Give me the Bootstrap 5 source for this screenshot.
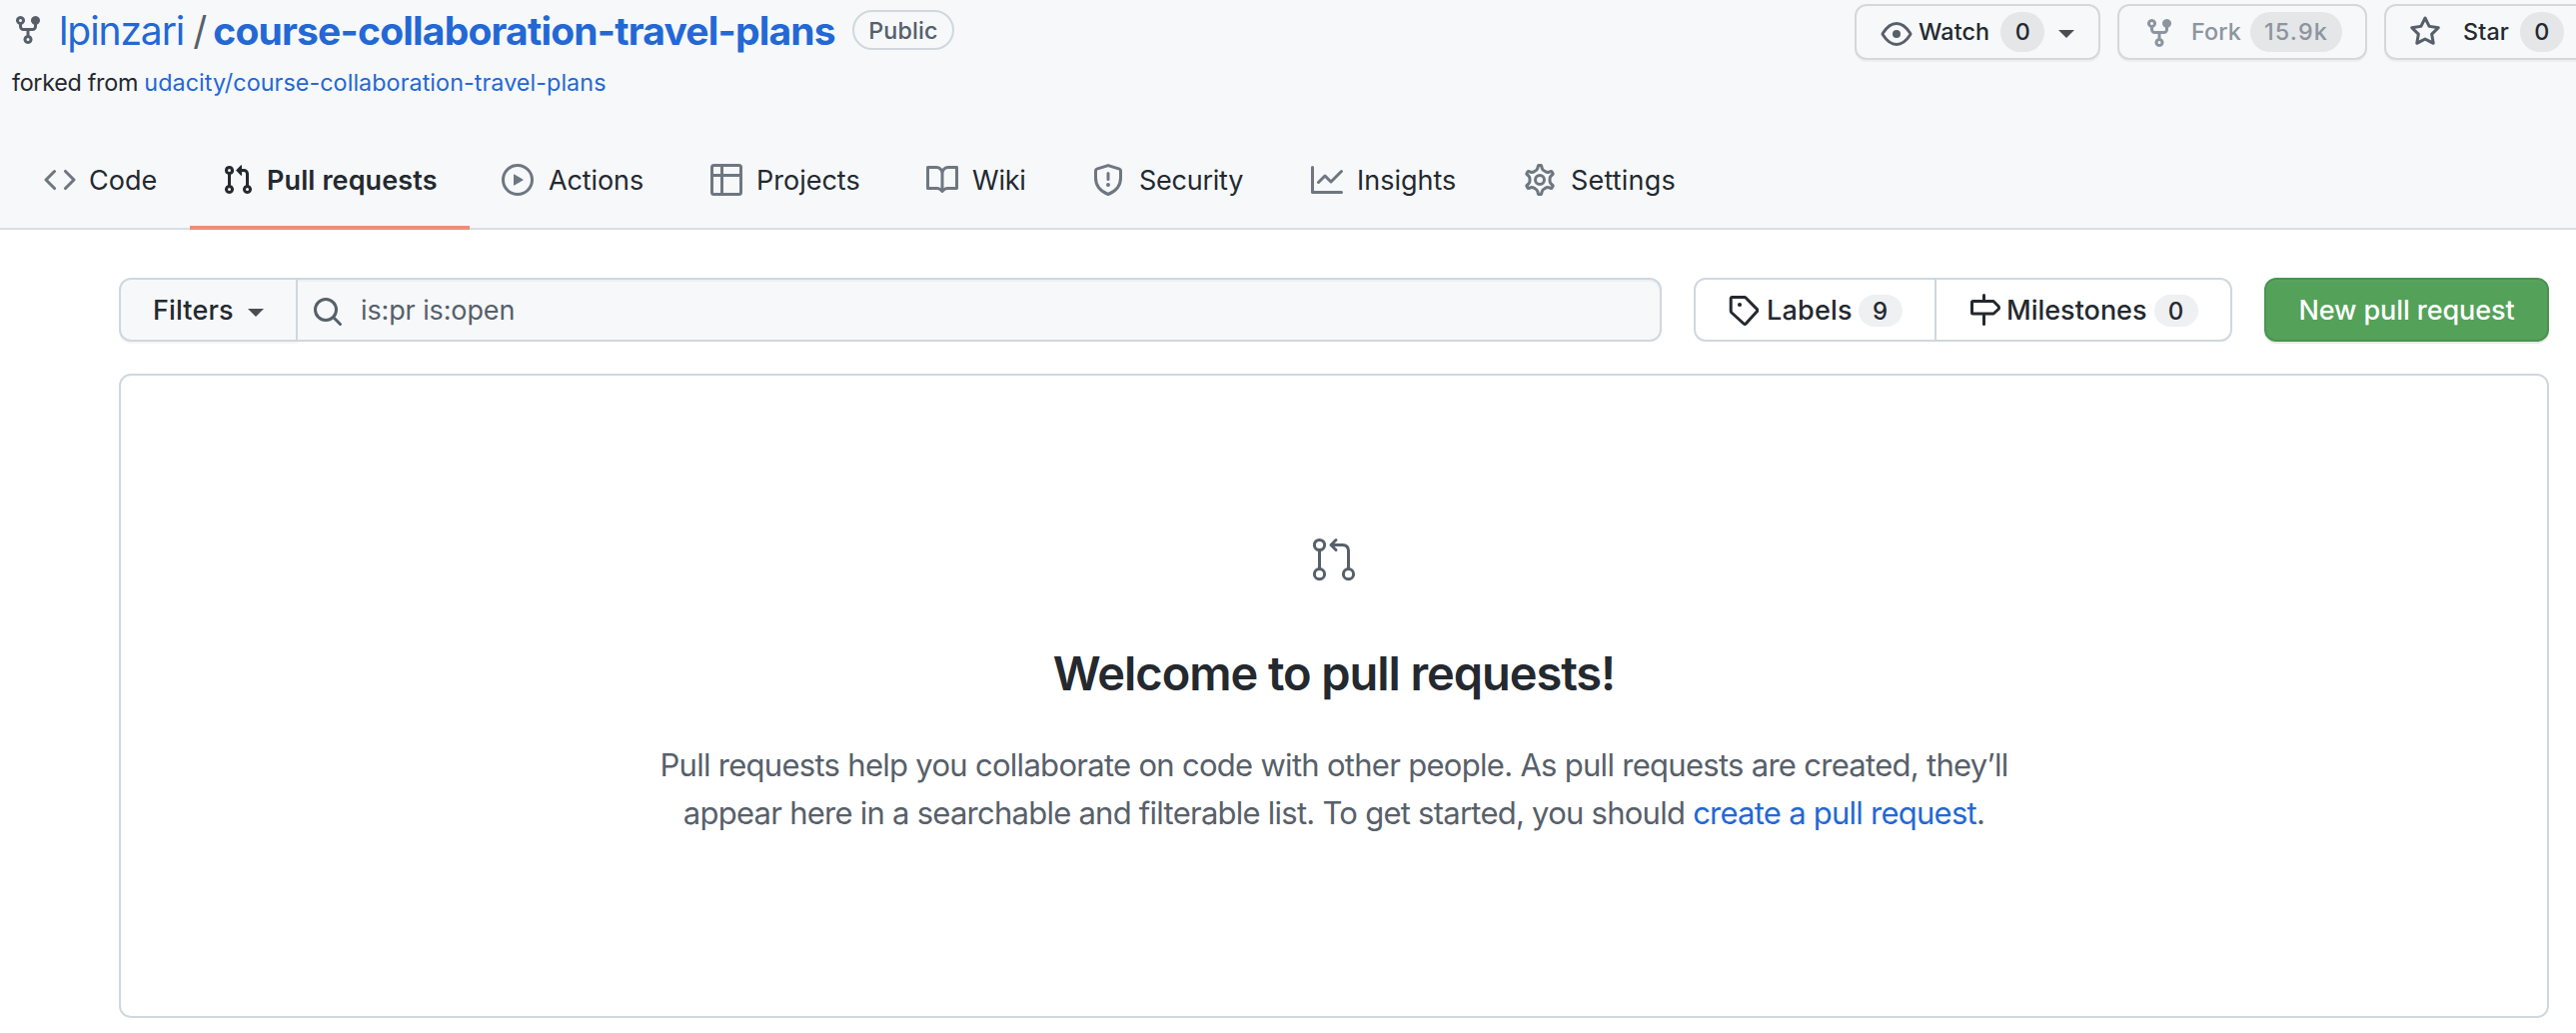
<!DOCTYPE html>
<html lang="en">
<head>
<meta charset="utf-8">
<title>Pull requests · lpinzari/course-collaboration-travel-plans</title>
<link href="https://cdn.jsdelivr.net/npm/bootstrap@5.3.0/dist/css/bootstrap.min.css" rel="stylesheet">
<style>
body{font-family:Inter,"Liberation Sans",sans-serif;color:#24292f;background:#fff;overflow:hidden}
a{color:#2368d4;text-decoration:none}
svg{display:block;flex:none;fill:currentColor}
.ln{fill:none;stroke:currentColor}
.repo-head{height:230px;background:#f6f8fa;border-bottom:2px solid #d8dee4;overflow:visible}
.repo-title{height:60px;margin-top:1px;padding-left:12px;font-size:39px;white-space:nowrap}
.repo-title svg{color:#57606a;margin-top:-3px}
.owner{margin-left:15px;letter-spacing:-1.1px}
.slash{color:#57606a;margin:0 6px 0 9px}
.repo-name{font-weight:650;letter-spacing:-.8px}
.pill{height:40px;border:2px solid #d0d7de;border-radius:40px;color:#57606a;font-size:23.3px;font-weight:500;letter-spacing:.1px;margin:-2px 0 0 17px;padding-top:2px;width:102px}
.fork-note{font-size:23.3px;line-height:34px;padding-left:12px;margin-top:5px}
.fork-note span{letter-spacing:-.28px}
.fork-note a{letter-spacing:.08px}
.actions{padding-top:4px;gap:17px}
.act{height:56px;border:2px solid #d5d8da;border-radius:12px;background:#f6f8fa;box-shadow:0 2px 0 rgba(27,31,36,.04);font-size:23.3px;font-weight:500;letter-spacing:.15px;white-space:nowrap}
.act svg{color:#57606a}
.act.off,.act.off svg{color:#8c959f}
.act span:not(.caret){padding-top:1px}
.cnt{height:40px;border-radius:40px;background:#e4e6e8}
.caret{border:8px solid transparent;border-top-color:#4a4e53;border-bottom:0}
.tabs{padding-left:12px;margin-bottom:-2px;height:96px}
.tab{padding:0 0 4px 32px;font-size:27px;gap:14px;color:#24292f;white-space:nowrap}
.tab svg{color:#6e7781}
.tab span{padding-top:2px}
.tab.on{font-weight:600;letter-spacing:.1px;padding-bottom:0;border-bottom:4px solid #ee8e79}
.tab.on svg{color:#24292f}
.content{padding:48px 27px 0 119px}
.bar{height:64px;margin-bottom:32px;font-size:27px;font-weight:500;white-space:nowrap}
.lbl{padding-top:2px}
.seg{border:2px solid #d0d7de;height:64px}
.filters{width:179px;border-radius:12px 0 0 12px;background:#f6f8fa;border-right:2px solid #d0d7de;box-shadow:0 2px 0 rgba(27,31,36,.04);padding-left:32px;letter-spacing:.15px}
.query{width:1367px;margin-left:-2px;border-radius:0 12px 12px 0;background:#f6f8fa;box-shadow:inset 0 2px 0 rgba(208,215,222,.25);color:#57606a;padding-left:14px;font-weight:400;letter-spacing:-.12px}
.linkset{width:539px;border-radius:12px;margin-left:32px}
.cnt2{height:32px;width:44px;border-radius:32px;background:#eef0f2;font-size:24px;padding-top:1px;margin-top:2px}
.newpr{width:285px;margin-left:32px;border:2px solid #4a9350;border-radius:12px;background:#54a159;color:#fff;letter-spacing:-.08px;box-shadow:0 2px 0 rgba(27,31,36,.1),inset 0 2px 0 rgba(255,255,255,.03)}
.blank{height:645px;border:2px solid #d0d7de;border-radius:12px;padding-top:160px}
.blank svg{color:#57606a}
.blank h3{font-size:47px;line-height:60px;font-weight:600;letter-spacing:-1.07px;margin:60px 0 0}
.blank p{font-size:31px;line-height:48px;color:#57606a;letter-spacing:-.71px;margin:38px 0 0;white-space:nowrap}
.blank .second{letter-spacing:-.75px}
</style>
<script src="https://cdn.jsdelivr.net/npm/bootstrap@5.3.0/dist/js/bootstrap.bundle.min.js"></script>
</head>
<body>
<svg width="0" height="0" class="position-absolute" aria-hidden="true"><defs>
<symbol id="fork" viewBox="0 0 16 16"><path d="M5 3.25a.75.75 0 11-1.5 0 .75.75 0 011.5 0zm0 2.122a2.25 2.25 0 10-1.5 0v.878A2.25 2.25 0 005.75 8.5h1.5v2.128a2.251 2.251 0 101.5 0V8.5h1.5a2.25 2.25 0 002.25-2.25v-.878a2.25 2.25 0 10-1.5 0v.878a.75.75 0 01-.75.75h-4.5A.75.75 0 015 6.25v-.878zm3.75 7.378a.75.75 0 11-1.5 0 .75.75 0 011.5 0zm3-8.75a.75.75 0 100-1.5.75.75 0 000 1.5z"/></symbol>
</defs></svg>
<header class="repo-head d-flex flex-column">
  <div class="d-flex">
    <div>
      <div class="repo-title d-flex align-items-center">
        <svg width="32" height="32"><use href="#fork"/></svg>
        <a class="owner" href="#">lpinzari</a><span class="slash">/</span><a class="repo-name" href="#">course-collaboration-travel-plans</a>
        <span class="pill d-flex align-items-center justify-content-center">Public</span>
      </div>
      <div class="fork-note"><span>forked from </span><a href="#">udacity/course-collaboration-travel-plans</a></div>
    </div>
    <div class="actions d-flex ms-auto">
      <div class="act d-flex align-items-center" style="width:246px;padding-left:24px">
        <svg width="32" height="32" viewBox="0 0 16 16" class="ln" style="margin-top:4px" stroke-width="1.5"><path d="M1.15 7.65C2.4 5.7 4.9 2.75 8 2.75s5.6 2.95 6.85 4.9a.6.6 0 010 .7C13.6 10.3 11.1 13.25 8 13.25S2.4 10.3 1.15 8.35a.6.6 0 010-.7z"/><circle cx="8" cy="8" r="2" fill="currentColor" stroke="none"/></svg>
        <span style="margin-left:6px">Watch</span>
        <span class="cnt d-flex align-items-center justify-content-center" style="width:44px;margin-left:11px">0</span>
        <span class="caret" style="margin:4px 0 0 14px"></span>
      </div>
      <div class="act off d-flex align-items-center" style="width:250px;padding-left:24px">
        <svg width="32" height="32" style="margin-top:2px"><use href="#fork"/></svg>
        <span style="margin-left:16px">Fork</span>
        <span class="cnt d-flex align-items-center justify-content-center" style="width:92px;margin-left:9px;letter-spacing:1.2px">15.9k</span>
      </div>
      <div class="act d-flex align-items-center border-end-0 rounded-end-0" style="width:192px;padding-left:23px">
        <svg width="32" height="32" viewBox="0 0 16 16"><path fill-rule="evenodd" d="M8 .25a.75.75 0 01.673.418l1.882 3.815 4.21.612a.75.75 0 01.416 1.279l-3.046 2.97.719 4.192a.75.75 0 01-1.088.791L8 12.347l-3.766 1.98a.75.75 0 01-1.088-.79l.72-4.194L.818 6.374a.75.75 0 01.416-1.28l4.21-.611L7.327.668A.75.75 0 018 .25zm0 2.445L6.615 5.5a.75.75 0 01-.564.41l-3.097.45 2.24 2.184a.75.75 0 01.216.664l-.528 3.084 2.769-1.456a.75.75 0 01.698 0l2.77 1.456-.53-3.084a.75.75 0 01.216-.664l2.24-2.183-3.096-.45a.75.75 0 01-.564-.41L8 2.694z"/></svg>
        <span style="margin-left:22px">Star</span>
        <span class="cnt d-flex align-items-center justify-content-center" style="width:44px;margin-left:11px">0</span>
      </div>
    </div>
  </div>
  <nav class="tabs d-flex mt-auto">
    <a class="tab d-flex align-items-center" style="width:178px;gap:13px" href="#"><svg width="32" height="32" viewBox="0 0 16 16"><path fill-rule="evenodd" d="M4.72 3.22a.75.75 0 011.06 1.06L2.06 8l3.72 3.72a.75.75 0 11-1.06 1.06L.47 8.53a.75.75 0 010-1.06l4.25-4.25zm6.56 0a.75.75 0 10-1.06 1.06L13.94 8l-3.72 3.72a.75.75 0 101.06 1.06l4.25-4.25a.75.75 0 000-1.06l-4.25-4.25z"/></svg><span>Code</span></a>
    <a class="tab on d-flex align-items-center" style="width:280px;gap:13px" href="#"><svg width="32" height="32" viewBox="0 0 16 16"><path fill-rule="evenodd" d="M7.177 3.073L9.573.677A.25.25 0 0110 .854v4.792a.25.25 0 01-.427.177L7.177 3.427a.25.25 0 010-.354zM3.75 2.5a.75.75 0 100 1.5.75.75 0 000-1.5zm-2.25.75a2.25 2.25 0 113 2.122v5.256a2.251 2.251 0 11-1.5 0V5.372A2.25 2.25 0 011.5 3.25zM11 2.5h-1V4h1a1 1 0 011 1v5.628a2.251 2.251 0 101.5 0V5A2.5 2.5 0 0011 2.5zm1 10.25a.75.75 0 111.5 0 .75.75 0 01-1.5 0zM3.75 12a.75.75 0 100 1.5.75.75 0 000-1.5z"/></svg><span>Pull requests</span></a>
    <a class="tab d-flex align-items-center" style="width:209px;letter-spacing:-.1px;gap:15px" href="#"><svg width="32" height="32" viewBox="0 0 16 16"><circle class="ln" cx="8" cy="8" r="7.25" stroke-width="1.5"/><path d="M6 5.442a.25.25 0 01.379-.214l4.264 2.559a.25.25 0 010 .428l-4.264 2.559A.25.25 0 016 10.559z"/></svg><span>Actions</span></a>
    <a class="tab d-flex align-items-center" style="width:216px" href="#"><svg width="32" height="32" viewBox="0 0 16 16" class="ln" stroke-width="1.5"><rect x=".75" y=".75" width="14.5" height="14.5" rx="1"/><path d="M5.75 1v14M1 5.75h14"/></svg><span>Projects</span></a>
    <a class="tab d-flex align-items-center" style="width:166px;letter-spacing:-.2px" href="#"><svg width="32" height="32" viewBox="0 0 16 16"><path fill-rule="evenodd" d="M0 1.75A.75.75 0 01.75 1h4.253c1.227 0 2.317.59 3 1.501A3.744 3.744 0 0111.006 1h4.245a.75.75 0 01.75.75v10.5a.75.75 0 01-.75.75h-4.507a2.25 2.25 0 00-1.591.659l-.622.621a.75.75 0 01-1.06 0l-.622-.621A2.25 2.25 0 005.258 13H.75a.75.75 0 01-.75-.75V1.75zm8.755 3a2.25 2.25 0 012.25-2.25H14.5v9h-3.757c-.71 0-1.4.201-1.992.572l.004-7.322zm-1.504 7.324l.004-5.073-.002-2.253A2.25 2.25 0 005.003 2.5H1.5v9h3.757a3.75 3.75 0 011.994.574z"/></svg><span>Wiki</span></a>
    <a class="tab d-flex align-items-center" style="width:219px;letter-spacing:-.25px;gap:15px" href="#"><svg width="32" height="32" viewBox="0 0 16 16"><path class="ln" stroke-width="1.5" stroke-linejoin="round" d="M8 .78L13.65 2.58q.6.2.6.82V7c0 3.5-1.9 6.5-6.25 8.25C3.65 13.5 1.75 10.5 1.75 7V3.4q0-.62.6-.82z"/><path class="ln" stroke-width="1.5" stroke-linecap="round" d="M8 4.75v3"/><circle cx="8" cy="10.5" r="1"/></svg><span>Security</span></a>
    <a class="tab d-flex align-items-center" style="width:213px" href="#"><svg width="32" height="32" viewBox="0 0 16 16" class="ln" stroke-width="1.5" stroke-linecap="round" stroke-linejoin="round"><path d="M.75 1.75v12.5h14.5M3.75 9.25L7 6l3 3 5.22-5.22"/></svg><span>Insights</span></a>
    <a class="tab d-flex align-items-center" style="letter-spacing:.2px;gap:15px" href="#"><svg width="32" height="32" viewBox="0 0 16 16" class="ln"><g transform="translate(8 8) scale(1.115) translate(-8 -8)"><path stroke-width="1.35" d="M7.429 1.525a6.593 6.593 0 011.142 0c.036.003.108.036.137.146l.289 1.105c.147.56.55.967.997 1.189.174.086.341.183.501.29.417.278.97.423 1.53.27l1.102-.303c.11-.03.175.016.195.046.219.31.41.641.573.989.014.031.022.11-.059.19l-.815.806c-.411.406-.562.957-.53 1.456a4.588 4.588 0 010 .582c-.032.499.119 1.05.53 1.456l.815.806c.08.08.073.159.059.19a6.494 6.494 0 01-.573.99c-.02.029-.086.074-.195.045l-1.103-.303c-.559-.153-1.112-.008-1.529.27-.16.107-.327.204-.5.29-.449.222-.851.628-.998 1.189l-.289 1.105c-.029.11-.101.143-.137.146a6.613 6.613 0 01-1.142 0c-.036-.003-.108-.037-.137-.146l-.289-1.105c-.147-.56-.55-.967-.997-1.189a4.502 4.502 0 01-.501-.29c-.417-.278-.97-.423-1.53-.27l-1.102.303c-.11.03-.175-.016-.195-.046a6.492 6.492 0 01-.573-.989c-.014-.031-.022-.11.059-.19l.815-.806c.411-.406.562-.957.53-1.456a4.587 4.587 0 010-.582c.032-.499-.119-1.05-.53-1.456l-.815-.806c-.08-.08-.073-.159-.059-.19a6.44 6.44 0 01.573-.99c.02-.029.086-.075.195-.045l1.103.303c.559.153 1.112.008 1.529-.27.16-.107.327-.204.5-.29.449-.222.851-.628.998-1.189l.289-1.105c.029-.11.101-.143.137-.146z"/></g><circle cx="8" cy="8" r="2.25" stroke-width="1.5"/></svg><span>Settings</span></a>
  </nav>
</header>
<main class="content">
  <div class="bar d-flex">
    <div class="seg filters d-flex align-items-center"><span class="lbl">Filters</span><span class="caret" style="margin:6px 0 0 14px"></span></div>
    <div class="seg query d-flex align-items-center">
      <svg width="32" height="32" viewBox="0 0 32 32" class="ln" style="margin-top:4px" stroke-width="3"><circle cx="14" cy="14" r="10.5"/><path stroke-linecap="round" d="M21.8 21.8l6.7 6.7"/></svg>
      <span class="lbl" style="margin-left:17px">is:pr is:open</span>
    </div>
    <div class="seg linkset d-flex">
      <a href="#" class="d-flex align-items-center text-reset" style="width:241px;padding-left:31px;box-shadow:inset -2px 0 #d0d7de;letter-spacing:.2px">
        <svg width="32" height="32" viewBox="0 0 32 32" class="ln" stroke-width="3" stroke-linejoin="round"><path d="M5 3.5h12.6q1 0 1.7.7L30.5 15.6q1 1 0 2L19.2 30q-1 1-2.1 0L5 19q-.8-.8-.8-1.8V4.5z"/><circle cx="13" cy="11" r="2.1" fill="currentColor" stroke="none"/></svg>
        <span class="lbl" style="margin-left:8px">Labels</span><span class="cnt2 d-flex align-items-center justify-content-center" style="margin-left:6px">9</span>
      </a>
      <a href="#" class="d-flex align-items-center text-reset" style="padding-left:32px">
        <svg width="32" height="32" viewBox="0 0 32 32" class="ln" stroke-width="3" stroke-linecap="round" stroke-linejoin="round"><path d="M15.5 1.5V7M15.5 21v9.5M4.5 7.5h20.5l5 5q1 1.5 0 3l-5 4.5H4.5q-1 0-1-1V8.5q0-1 1-1z"/></svg>
        <span class="lbl" style="margin-left:6px">Milestones</span><span class="cnt2 d-flex align-items-center justify-content-center" style="margin-left:7px">0</span>
      </a>
    </div>
    <a href="#" class="newpr d-flex align-items-center justify-content-center"><span class="lbl">New pull request</span></a>
  </div>
  <section class="blank d-flex flex-column align-items-center text-center">
    <svg width="48" height="48" viewBox="0 0 48 48" class="ln" stroke-width="3" stroke-linecap="round" stroke-linejoin="round"><circle cx="9.5" cy="9.5" r="5.1"/><circle cx="9.5" cy="38.7" r="5.1"/><circle cx="38.5" cy="38.7" r="5.1"/><path d="M9.5 15v18M38.5 33V15.5q0-6-6-6H21M26 4.5l-5 5 5 5"/></svg>
    <h3>Welcome to pull requests!</h3>
    <p>Pull requests help you collaborate on code with other people. As pull requests are created, they’ll<br><span class="second">appear here in a searchable and filterable list. To get started, you should <a href="#">create a pull request</a>.</span></p>
  </section>
</main>
</body>
</html>
